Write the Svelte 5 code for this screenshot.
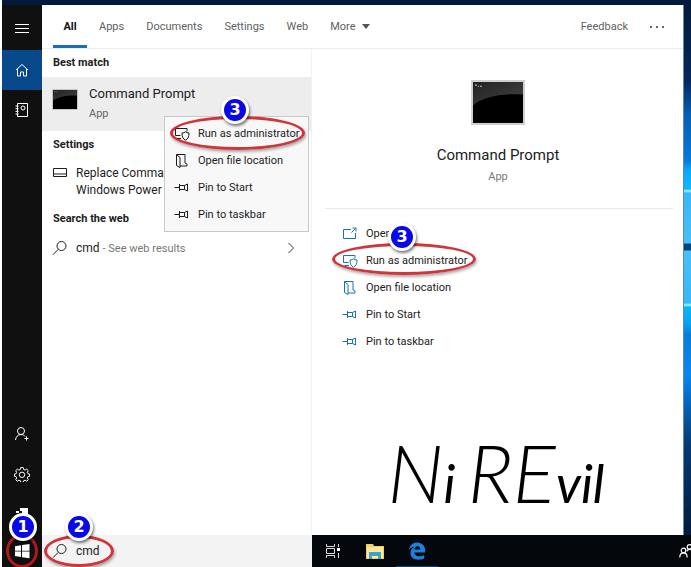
<script>
  const tabs = ['All', 'Apps', 'Documents', 'Settings', 'Web'];
  const menuItems = [
    { icon: 'admin', label: 'Run as administrator', step: 3 },
    { icon: 'folder', label: 'Open file location' },
    { icon: 'pin', label: 'Pin to Start' },
    { icon: 'pin', label: 'Pin to taskbar' }
  ];
  const actions = [{ icon: 'open', label: 'Open' }, ...menuItems];
  let query = $state('cmd');
</script>

{#snippet icon(name)}
  <svg class="glyph" viewBox="0 0 16 16" aria-hidden="true">
    {#if name === 'open'}
      <path d="M9 3.500H1.500v9h12V7M9.500 6.500l4-4M10.500 2H14v3.500" />
    {:else if name === 'admin'}
      <path d="M6.500 9.500H1.500v-7h11.500v3M2.500 12.500H7M8 7c1.500 0 2.500-.4 3.500-1.200C12.500 6.600 13.500 7 15 7c0 4-1 5.800-3.500 7.200C9 12.800 8 11 8 7z" />
    {:else if name === 'folder'}
      <path d="M2.500 1.500v11l3.500 2V4.500l-3.500-3h8.500v8.500l2 1v2H6" />
    {:else if name === 'pin'}
      <path d="M.5 7.500h5M5.500 4v7M5.500 5.500h5l3-1.500v7l-3-1.500h-5M10.500 5.500v4" />
    {:else if name === 'search'}
      <circle cx="9.500" cy="6" r="4.500" /><path d="M6.200 9.400L1 14.700" />
    {:else if name === 'panel'}
      <path d="M1.500 3.500h13v8h-13zM1.500 9h13" />
    {:else if name === 'menu'}
      <path d="M1 4.500h14M1 8.500h14M1 12.500h14" />
    {:else if name === 'home'}
      <path d="M2 8l6-5.500L14 8M3.500 7v7h3v-4h3v4h3V7" />
    {:else if name === 'notebook'}
      <path d="M3.500 1.500h10v13h-10zM1.500 4h3M1.500 6.700h3M1.500 9.400h3M1.500 12h3" /><circle cx="9" cy="6" r="2" />
    {:else if name === 'person'}
      <circle cx="7" cy="5" r="3.500" /><path d="M1.500 14c.4-3.300 2.500-5.500 5.500-5.500 1.800 0 3.300.8 4.200 2M12.500 10.500v4M10.500 12.500h4" />
    {:else if name === 'gear'}
      <path d="M6.800 1.500h2.400l.4 1.900 1.500.7 1.600-1 1.600 1.600-1 1.600.6 1.400 1.700.4v2.200l-1.700.4-.6 1.400 1 1.600-1.600 1.500-1.600-1-1.500.6-.4 1.600H6.800l-.4-1.600-1.500-.6-1.600 1-1.600-1.500 1-1.600-.6-1.400-1.600-.4V8.100l1.600-.4.6-1.400-1-1.600 1.600-1.600 1.600 1 1.500-.7z" /><circle cx="8" cy="8.800" r="2.700" />
    {/if}
  </svg>
{/snippet}

{#snippet mark(n, kind)}
  <span class="ring {kind}"></span><span class="badge {kind}">{n}</span>
{/snippet}

{#snippet consoleIcon(cls)}
  <svg class={cls} viewBox="0 0 54 44" preserveAspectRatio="none" aria-hidden="true">
    <defs>
      <linearGradient id="shine-{cls}" x1="0" y1="0" x2="1" y2="1">
        <stop offset="0" stop-color="#222" /><stop offset="1" stop-color="#444" />
      </linearGradient>
    </defs>
    <rect width="54" height="44" fill="#cfcfcf" />
    <rect x="2" y="2" width="50" height="40" fill="#000" />
    <path d="M2 2h50v12C32 13 12 16 2 25z" fill="url(#shine-{cls})" />
    <path d="M4 5h2M7 6h1M9 6h2" stroke="#bbb" fill="none" />
  </svg>
{/snippet}

<div class="desktop">
  <nav class="rail" aria-label="Start">
    <button class="top" aria-label="Menu">{@render icon('menu')}</button>
    <button class="active" aria-label="Home">{@render icon('home')}</button>
    <button aria-label="Notebook">{@render icon('notebook')}</button>
    <span class="grow"></span>
    <button aria-label="Account">{@render icon('person')}</button>
    <button aria-label="Settings">{@render icon('gear')}</button>
    <button aria-label="Devices">
      <svg class="glyph" viewBox="0 0 16 16" aria-hidden="true"><path d="M6 2h8v7H8V5H6zM2 5h3v2H2z" fill="#fff" stroke="none" /></svg>
    </button>
    <button class="start" aria-label="Windows">
      <svg class="glyph" viewBox="0 0 16 16" aria-hidden="true"><path d="M1 3.200L7 2.300v5.400H1zM8 2.100L15.500 1v6.700H8zM1 8.600h6V14l-6-.9zM8 8.600h7.500V15.300L8 14.200z" fill="#fff" stroke="none" /></svg>
      {@render mark(1, 'm1')}
    </button>
  </nav>

  <div class="main">
    <div class="upper">
      <main class="panel">
        <header class="tabs">
          {#each tabs as tab, i}
            <button class:current={i === 0}>{tab}</button>
          {/each}
          <button>More <span class="caret"></span></button>
          <span class="grow"></span>
          <button>Feedback</button>
          <button class="dots" aria-label="Options"><i></i><i></i><i></i></button>
        </header>
        <div class="body">
          <section class="results">
            <h2>Best match</h2>
            <div class="best">
              {@render consoleIcon('small')}
              <div class="name"><strong>Command Prompt</strong><span>App</span></div>
              <div class="menu">
                {#each menuItems as item}
                  <button>
                    {@render icon(item.icon)}<span>{item.label}</span>
                    {#if item.step}{@render mark(item.step, 'm3')}{/if}
                  </button>
                {/each}
              </div>
            </div>
            <h2>Settings</h2>
            <a class="row two" href="#settings">{@render icon('panel')}<span>Replace Command<br />Windows Power</span></a>
            <h2>Search the web</h2>
            <a class="row" href="#web">
              {@render icon('search')}<span>cmd <small>- See web results</small></span>
              <svg class="chevron" viewBox="0 0 8 12" aria-hidden="true"><path d="M1.500 1l5 5-5 5" /></svg>
            </a>
          </section>
          <section class="detail">
            <div class="hero">
              {@render consoleIcon('large')}
              <h1>Command Prompt</h1>
              <p>App</p>
            </div>
            <div class="actions">
              {#each actions as item}
                <button>
                  {@render icon(item.icon)}<span>{item.label}</span>
                  {#if item.step}{@render mark(item.step, 'm4')}{/if}
                </button>
              {/each}
            </div>
            <div class="signature"><b>N</b>i <b>RE</b>vil</div>
          </section>
        </div>
      </main>
      <div class="wallpaper"></div>
    </div>
    <footer class="bottom">
      <label class="search">
        {@render icon('search')}
        <input aria-label="Search" bind:value={query} />
        {@render mark(2, 'm2')}
      </label>
      <div class="taskbar">
        <button aria-label="Task view">
          <svg width="16" height="14" viewBox="0 0 16 14" aria-hidden="true"><path d="M1.500 0v2.500h8V0M1.500 14v-2.500h8V14M1.500 4.500h8v5h-8zM13.500 0v3M13.500 9v5" fill="none" stroke="#ddd" /><path d="M12 4h3v3h-3z" fill="#fff" /></svg>
        </button>
        <button aria-label="File Explorer">
          <svg width="20" height="16" viewBox="0 0 20 16" aria-hidden="true"><path d="M1 1h7l1 2h10v13H1z" fill="#f3cf6b" /><path d="M2 4h16v11H2z" fill="#ffe79b" /><path d="M4 16V9h12v7h-3v-3H7v3z" fill="#3aa5cc" /></svg>
        </button>
        <button class="running" aria-label="Edge">
          <svg width="18" height="18" viewBox="0 0 18 18" aria-hidden="true"><path d="M1 8C1.600 3 4.800.4 9.200.4c5 0 8 3.600 8 8.200v2H6.300c.1 2.400 2 3.700 4.800 3.700 2 0 3.600-.5 5-1.300v3.500c-1.500.8-3.400 1.200-5.600 1.200C5.400 17.700 2.500 15 2.500 11c0-2.700 1.400-4.900 3.800-6.200C4 5.100 2.200 6.200 1 8zm5.400-.4h5.900c0-2-1-3.300-2.800-3.300-1.700 0-2.800 1.300-3.100 3.300z" fill="#1c80dc" /></svg>
        </button>
        <span class="grow"></span>
        <button class="people" aria-label="People">
          <svg width="16" height="14" viewBox="0 0 16 14" fill="none" stroke="#fff" stroke-width="1.200" aria-hidden="true"><circle cx="4.500" cy="6.500" r="2.300" /><path d="M.8 13.500c0-3 1.500-4.600 3.700-4.600s3.700 1.600 3.700 4.600" /><circle cx="10.500" cy="2.900" r="2.300" /><path d="M7.800 7.200c.6-1.200 1.500-1.900 2.700-1.900 2.200 0 3.700 1.600 3.700 4.600" /></svg>
        </button>
      </div>
    </footer>
  </div>
</div>

<style>
  :global(body) { margin: 0; }
  * { box-sizing: border-box; }
  .desktop {
    display: flex;
    min-height: 100vh;
    padding-left: 2px;
    overflow: hidden;
    background: #fff;
    color: #1c1c1c;
    font: 11px/16px Roboto, "Open Sans", sans-serif;
  }
  button {
    position: relative;
    display: flex;
    align-items: center;
    margin: 0;
    padding: 0;
    border: 0;
    background: none;
    color: inherit;
    font: inherit;
    white-space: nowrap;
  }
  a { color: inherit; text-decoration: none; }
  h1, h2, p { margin: 0; font-weight: 400; }
  .grow { flex: 1; }
  .glyph { width: 16px; height: 16px; flex: none; fill: none; stroke: currentColor; stroke-width: 1; }

  .rail { display: flex; flex-direction: column; width: 40px; background: #101010; border-top: 5px solid #031a3c; color: #fff; }
  .rail button { height: 40px; justify-content: center; }
  .rail .top { height: 45px; }
  .rail .active { background: #07488a; }
  .rail .start { height: 33px; }

  .main { flex: 1; min-width: 0; display: flex; flex-direction: column; }
  .upper { flex: 1; display: flex; padding-top: 5px; background: #031a3c; }
  .panel { flex: 1; min-width: 0; display: flex; flex-direction: column; background: #fff; }
  .wallpaper {
    width: 8px;
    border-left: 1px solid #5b8cae;
    background: linear-gradient(#031a3c 0, #04275a 75px, #0560b4 110px, #0878d8 155px, #08a8f8 165px, #10b8ff 184px, #b8f0ff 186px, #38b8f8 188px, #48c0f8 238px, #06447e 239px, #06447e 245px, #48c0f8 246px, #38b8f8 298px, #b0f8ff 300px, #08b8f8 302px, #08a0f0 320px, #087cd8 330px, #0888f0 370px, #0464b8 400px, #043a74 440px, #031a3c 100%);
  }
  .tabs { display: flex; height: 44px; gap: 22px; padding: 0 19px 0 11px; border-bottom: 1px solid #ececec; color: #616161; }
  .tabs button { justify-content: center; border-top: 3px solid transparent; border-bottom: 3px solid transparent; }
  .tabs .current { width: 34px; margin-right: -10px; border-bottom-color: #1a6fb8; color: #111; font-weight: 700; }
  .caret { margin-left: 6px; border: 4px solid transparent; border-top: 5px solid #555; border-bottom: 0; }
  .dots { gap: 4px; }
  .dots i { width: 2px; height: 2px; background: #666; }

  .body { flex: 1; display: flex; }
  .results { width: 270px; flex: none; border-right: 1px solid #f2f2f2; }
  h2 { padding: 6px 11px; font-size: 11px; line-height: 16px; font-weight: 700; }
  .best { position: relative; display: flex; height: 54px; padding: 8px 10px 0; gap: 11px; background: #ededed; }
  .small { width: 26px; height: 21px; margin-top: 4px; }
  .name { display: flex; flex-direction: column; gap: 3px; }
  .name strong { font-size: 13px; line-height: 18px; font-weight: 400; }
  .name span { color: #666; }
  .row { display: flex; align-items: center; gap: 8px; height: 30px; padding: 0 16px 0 10px; font-size: 12px; line-height: 17px; white-space: nowrap; }
  .row.two { height: 46px; align-items: flex-start; padding-top: 6px; }
  small { font-size: 11px; color: #777; }
  .chevron { width: 8px; height: 12px; margin-left: auto; fill: none; stroke: #333; }
  .menu { position: absolute; z-index: 2; top: 39px; left: 122px; width: 145px; padding: 3px 0; border: 1px solid #c9c9c9; background: #f8f8f8; }
  .menu button, .actions button { width: 100%; height: 27px; }
  .menu button { padding-left: 9px; gap: 8px; }

  .detail { flex: 1; min-width: 0; display: flex; flex-direction: column; padding: 0 10px 0 13px; }
  .hero { display: flex; flex-direction: column; align-items: center; height: 160px; padding: 31px 2px 0 0; border-bottom: 1px solid #e8e8e8; }
  .large { width: 54px; height: 45px; }
  h1 { margin-top: 20px; font-size: 15px; line-height: 20px; }
  .hero p { margin-top: 4px; color: #777; }
  .actions { display: flex; flex-direction: column; padding-top: 11px; }
  .actions button { padding-left: 17px; gap: 8px; }
  .actions .glyph { color: #1a73a8; }
  .signature {
    margin: auto 0 4px;
    padding-right: 6px;
    color: #000;
    text-align: center;
    font: italic 52px/96px Lato, cursive;
  }
  .signature b { font-size: 80px; font-weight: 300; }

  .bottom { display: flex; height: 32px; }
  .search { position: relative; display: flex; align-items: center; gap: 8px; width: 270px; padding-left: 10px; background: #f3f3f3; }
  .search input { flex: 1; min-width: 0; padding: 0; border: 0; outline: 0; background: none; color: #1c1c1c; font: 12px/17px Roboto, "Open Sans", sans-serif; }
  .taskbar { flex: 1; display: flex; background: #04070c; overflow: hidden; }
  .taskbar button { width: 42px; justify-content: center; }
  .taskbar .running { border-bottom: 1px solid #10406c; }
  .taskbar .people { width: 12px; justify-content: flex-start; overflow: hidden; }
  .people svg { flex: none; }

  .ring { position: absolute; z-index: 3; border: 3px solid #c9191ee0; border-radius: 50%; box-shadow: 1px 2px 3px #0005; pointer-events: none; }
  .badge {
    position: absolute;
    z-index: 4;
    width: 28px;
    height: 28px;
    border: 3px solid #fff;
    border-radius: 50%;
    background: #0808e8;
    box-shadow: 1px 2px 3px #0008;
    color: #fff;
    font: bold 16px/22px "DejaVu Sans", sans-serif;
    text-align: center;
  }
  .ring.m1 { left: 4px; top: 0; width: 32px; height: 34px; }
  .badge.m1 { left: 7px; top: -21px; }
  .ring.m2 { left: 2px; top: 0; width: 70px; height: 32px; }
  .badge.m2 { left: 23px; top: -22px; }
  .ring.m3 { left: 5px; top: -4px; width: 135px; height: 34px; }
  .badge.m3 { left: 56px; top: -24px; }
  .ring.m4 { left: 7px; top: -4px; width: 144px; height: 32px; }
  .badge.m4 { left: 63px; top: -24px; }
</style>
